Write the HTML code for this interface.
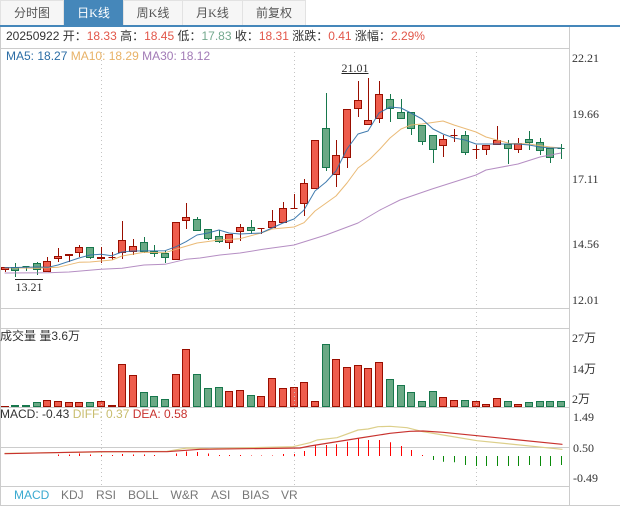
<!DOCTYPE html>
<html><head><meta charset="utf-8"><style>
html,body{margin:0;padding:0;background:#fff;width:620px;height:506px;overflow:hidden}
svg{display:block}
text{font-family:"Liberation Sans","WenQuanYi Zen Hei",sans-serif;font-size:12px;fill:#333}
.s{font-family:"Liberation Serif","WenQuanYi Zen Hei",serif;fill:#333}
.t{font-family:"Liberation Serif","WenQuanYi Zen Hei",serif;fill:#555;text-anchor:middle}
.r{fill:#e2574a}.g{fill:#74a98e}
.b{fill:#777}
polyline{stroke-linejoin:round;stroke-linecap:round}
</style></head><body>
<svg width="620" height="506" viewBox="0 0 620 506" xmlns="http://www.w3.org/2000/svg">
<!-- tabs -->
<g fill="#f6f6f6" stroke="#e2e2e2"><rect x="0.5" y="0.5" width="63" height="25"/><rect x="123.5" y="0.5" width="59" height="25"/><rect x="182.5" y="0.5" width="60" height="25"/><rect x="242.5" y="0.5" width="63" height="25"/></g>
<rect x="64" y="0" width="59" height="26" fill="#4587ba"/>
<rect x="0" y="25" width="620" height="2" fill="#4587ba"/>
<text class="t" x="32" y="17">分时图</text>
<text class="t" x="93.5" y="17" style="fill:#fff">日K线</text>
<text class="t" x="153" y="17">周K线</text>
<text class="t" x="212.5" y="17">月K线</text>
<text class="t" x="274" y="17">前复权</text>
<!-- frame -->
<path d="M.5 27V505.5H620M569.5 27V505.5M1 48.5H569M1 308.5H569M1 328.5H569M1 407.5H569M1 447.5H569M1 486.5H569" fill="none" stroke="#ccc"/>
<!-- volume -->
<path fill="#ee5c4c" stroke="#990e00" d="M43.5 400.5h7V406.5h-7zM54.5 401.5h7V406.5h-7zM65.5 402.5h7V406.5h-7zM75.5 402.5h7V406.5h-7zM97.5 401.5h7V406.5h-7zM118.5 364.5h7V406.5h-7zM129.5 375.5h7V406.5h-7zM172.5 374.5h7V406.5h-7zM182.5 349.5h7V406.5h-7zM225.5 391.5h7V406.5h-7zM236.5 390.5h7V406.5h-7zM257.5 396.5h7V406.5h-7zM268.5 378.5h7V406.5h-7zM279.5 388.5h7V406.5h-7zM290.5 387.5h7V406.5h-7zM300.5 382.5h7V406.5h-7zM311.5 401.5h7V406.5h-7zM332.5 359.5h7V406.5h-7zM343.5 367.5h7V406.5h-7zM354.5 365.5h7V406.5h-7zM364.5 368.5h7V406.5h-7zM375.5 362.5h7V406.5h-7zM439.5 397.5h7V406.5h-7zM450.5 400.5h7V406.5h-7zM472.5 401.5h7V406.5h-7zM482.5 404.5h7V406.5h-7zM493.5 398.5h7V406.5h-7zM514.5 404.5h7V406.5h-7z"/>
<path fill="#990e00" d="M1 406h8v1H1zM108 405h8v2h-8z"/>
<path fill="#6aa985" stroke="#17774c" d="M33.5 402.5h7V406.5h-7zM86.5 402.5h7V406.5h-7zM140.5 392.5h7V406.5h-7zM150.5 396.5h7V406.5h-7zM161.5 399.5h7V406.5h-7zM193.5 374.5h7V406.5h-7zM204.5 388.5h7V406.5h-7zM215.5 387.5h7V406.5h-7zM247.5 395.5h7V406.5h-7zM322.5 344.5h7V406.5h-7zM386.5 379.5h7V406.5h-7zM397.5 385.5h7V406.5h-7zM407.5 392.5h7V406.5h-7zM418.5 401.5h7V406.5h-7zM429.5 391.5h7V406.5h-7zM461.5 400.5h7V406.5h-7zM504.5 401.5h7V406.5h-7zM525.5 402.5h7V406.5h-7zM536.5 401.5h7V406.5h-7zM546.5 401.5h7V406.5h-7zM557.5 401.5h7V406.5h-7z"/>
<path fill="#17774c" d="M11 405h8v2h-8zM22 405h8v2h-8z"/>
<!-- dotted verticals -->
<path d="M101.5 52V486M294.5 52V486M476.5 52V486" stroke="#c4c4c4" stroke-dasharray="1 3" fill="none"/>
<!-- wicks -->
<path fill="none" stroke="#990e00" d="M5.5 267V272M47.5 257V271M58.5 248V262M69.5 254V262M79.5 245V257M101.5 247V263M112.5 252V260M122.5 221V259M133.5 239V255M176.5 222V259M186.5 203V229M229.5 234V249M240.5 224V241M261.5 228V234M272.5 210V228M283.5 202V222M294.5 194V208M304.5 179V216M315.5 140V188M336.5 140V187M347.5 109V168M358.5 81V117M368.5 78V125M379.5 81V123M443.5 135V157M454.5 129V142M476.5 145V159M486.5 145V155M497.5 126V144M518.5 138V153"/>
<path fill="none" stroke="#17774c" d="M15.5 263V277M26.5 266V271M37.5 262V275M90.5 247V259M144.5 237V253M154.5 245V257M165.5 251V263M197.5 217V231M208.5 229V240M219.5 230V243M251.5 220V234M326.5 93V171M390.5 94V122M401.5 99V119M411.5 112V135M422.5 125V145M433.5 135V163M465.5 131V155M508.5 140V164M529.5 131V150M540.5 138V155M550.5 148V163M561.5 144V159"/>
<!-- bodies -->
<path fill="#ee5c4c" stroke="#990e00" d="M1.5 267.5h7v2h-7zM43.5 261.5h7v10h-7zM54.5 256.5h7v2h-7zM65.5 254.5h7v1h-7zM75.5 247.5h7v5h-7zM97.5 257.5h7v1h-7zM108.5 257.5h7v0h-7zM118.5 240.5h7v12h-7zM129.5 246.5h7v5h-7zM172.5 222.5h7v37h-7zM182.5 217.5h7v3h-7zM225.5 234.5h7v8h-7zM236.5 227.5h7v4h-7zM257.5 228.5h7v0h-7zM268.5 221.5h7v6h-7zM279.5 208.5h7v14h-7zM290.5 208.5h7v0h-7zM300.5 183.5h7v20h-7zM311.5 140.5h7v48h-7zM332.5 155.5h7v19h-7zM343.5 109.5h7v48h-7zM354.5 100.5h7v8h-7zM364.5 120.5h7v4h-7zM375.5 94.5h7v24h-7zM439.5 139.5h7v6h-7zM450.5 135.5h7v0h-7zM472.5 149.5h7v0h-7zM482.5 145.5h7v4h-7zM493.5 140.5h7v4h-7zM514.5 143.5h7v6h-7z"/>
<path fill="#6aa985" stroke="#17774c" d="M11.5 267.5h7v3h-7zM22.5 266.5h7v0h-7zM33.5 263.5h7v6h-7zM86.5 247.5h7v10h-7zM140.5 242.5h7v9h-7zM150.5 251.5h7v2h-7zM161.5 253.5h7v4h-7zM193.5 219.5h7v11h-7zM204.5 229.5h7v9h-7zM215.5 236.5h7v5h-7zM247.5 227.5h7v3h-7zM322.5 128.5h7v39h-7zM386.5 99.5h7v9h-7zM397.5 112.5h7v6h-7zM407.5 112.5h7v16h-7zM418.5 125.5h7v16h-7zM429.5 135.5h7v14h-7zM461.5 135.5h7v17h-7zM504.5 144.5h7v4h-7zM525.5 139.5h7v3h-7zM536.5 142.5h7v8h-7zM546.5 148.5h7v9h-7zM557.5 148.5h7v0h-7z"/>
<!-- MAs -->
<polyline fill="none" stroke="#a87ab8" stroke-opacity=".85" points="5,273 48,272.7 69,272 101,269.3 122,268.3 144,265 165,264.3 186,259.3 200,258 220,255 240,253 263,249.3 294,245 326,235 358,223 380,210 400,200 432,189 476,175 486,170 518,164 540,157 561,153"/>
<polyline fill="none" stroke="#e8b267" stroke-opacity=".9" points="5,267.7 37,268.3 58,267.3 79,262.3 90,262 112,260 122,256 144,252.3 165,252.7 176,249.3 180,248 197,243 219,240 240,238.7 261,233 272,229 294,227 304,222.7 315,211 336,196 347,183 358,168 370,159 380,149 390,138 401,129 411,125 422,124 443,121 454,125 476,132 486,137 508,143 529,144 550,147 561,148"/>
<polyline fill="none" stroke="#2c6ea6" stroke-opacity=".9" points="5,267.7 37,267 48,267.3 58,265 79,258 90,255 101,254.3 112,255.7 122,252 133,251 165,250.7 176,246.7 186,241.7 197,235 208,233 219,230 229,233 240,234 261,233 272,228 283,223 294,219 304,210 315,191 326,182 336,171 347,149 358,134 368,131 379,113 390,107 401,108 411,113 422,119 433,129 443,134 454,138 465,140 476,144 486,144 508,144 518,144 529,145 540,147 550,148 561,148"/>
<!-- MACD hist -->
<path fill="none" stroke="#f00" d="M58.5 454.5V456M69.5 454.5V456M79.5 453.5V456M90.5 454.5V456M101.5 455V456M112.5 455V456M122.5 454V456M133.5 454.5V456M144.5 454.5V456M154.5 455V456M176.5 453.5V456M186.5 451.5V456M197.5 452V456M208.5 453.5V456M219.5 455V456M229.5 455V456M240.5 455V456M251.5 455.5V456M261.5 455.5V456M272.5 455.5V456M283.5 454V456M294.5 454V456M304.5 451V456M315.5 445V456M326.5 445V456M336.5 444.3V456M347.5 441.7V456M358.5 438.3V456M368.5 440V456M379.5 440V456M390.5 442.3V456M401.5 446V456M411.5 450V456M422.5 455V456"/>
<path fill="none" stroke="#0a8a0a" d="M433.5 456V460M443.5 456V461.7M454.5 456V462.3M465.5 456V465M476.5 456V466M486.5 456V466M497.5 456V466M508.5 456V466M518.5 456V466M529.5 456V465M540.5 456V466M550.5 456V466M561.5 456V465"/>
<polyline fill="none" stroke="#dccf8a" stroke-width="1.2" points="5,453.3 100,452 167,451.3 187,448 210,448.7 293,446.7 310,442.7 317,440 337,437.7 358,430 368,429 378,426.7 390,426.3 407,427.7 423,431.7 443,435 477,440.7 510,444 562,449.3"/>
<polyline fill="none" stroke="#c8322e" stroke-width="1.2" points="5,453.7 100,451.7 167,451.7 200,449.3 300,448 310,446 360,438 390,433.3 410,431.3 423,431 443,432.3 477,435.7 562,444.3"/>
<!-- text -->
<text x="6" y="40" xml:space="preserve">20250922 开：<tspan class="r">18.33</tspan> 高：<tspan class="r">18.45</tspan> 低：<tspan class="g">17.83</tspan> 收：<tspan class="r">18.31</tspan> 涨跌：<tspan class="r">0.41</tspan> 涨幅：<tspan class="r">2.29%</tspan></text>
<text x="6" y="60"><tspan fill="#2c6ea6">MA5: 18.27</tspan> <tspan fill="#e8b267">MA10: 18.29</tspan> <tspan fill="#a27bb6">MA30: 18.12</tspan></text>
<text x="0" y="340">成交量 量3.6万</text>
<text x="0" y="418">MACD: -0.43 <tspan fill="#c8bd6e">DIFF: 0.37</tspan> <tspan fill="#c8322e">DEA: 0.58</tspan></text>
<text class="s" x="341.5" y="72">21.01</text><path d="M341.5 73.5H368.5" stroke="#222"/>
<text class="s" x="15.5" y="291">13.21</text><path d="M15 279.5H43" stroke="#222"/>
<g class="ax">
<text class="s" x="572" y="62">22.21</text>
<text class="s" x="572" y="118">19.66</text>
<text class="s" x="572" y="183">17.11</text>
<text class="s" x="572" y="248">14.56</text>
<text class="s" x="572" y="304">12.01</text>
<text class="s" x="572" y="342">27万</text>
<text class="s" x="572" y="373">14万</text>
<text class="s" x="572" y="403">2万</text>
<text class="s" x="573" y="421">1.49</text>
<text class="s" x="573" y="452">0.50</text>
<text class="s" x="573" y="482">-0.49</text>
</g>
<text x="14" y="499" style="fill:#3aa9d0">MACD</text>
<text class="b" x="61" y="499">KDJ</text>
<text class="b" x="96" y="499">RSI</text>
<text class="b" x="128" y="499">BOLL</text>
<text class="b" x="170.5" y="499">W&amp;R</text>
<text class="b" x="211" y="499">ASI</text>
<text class="b" x="242" y="499">BIAS</text>
<text class="b" x="281" y="499">VR</text>
</svg>
</body></html>
